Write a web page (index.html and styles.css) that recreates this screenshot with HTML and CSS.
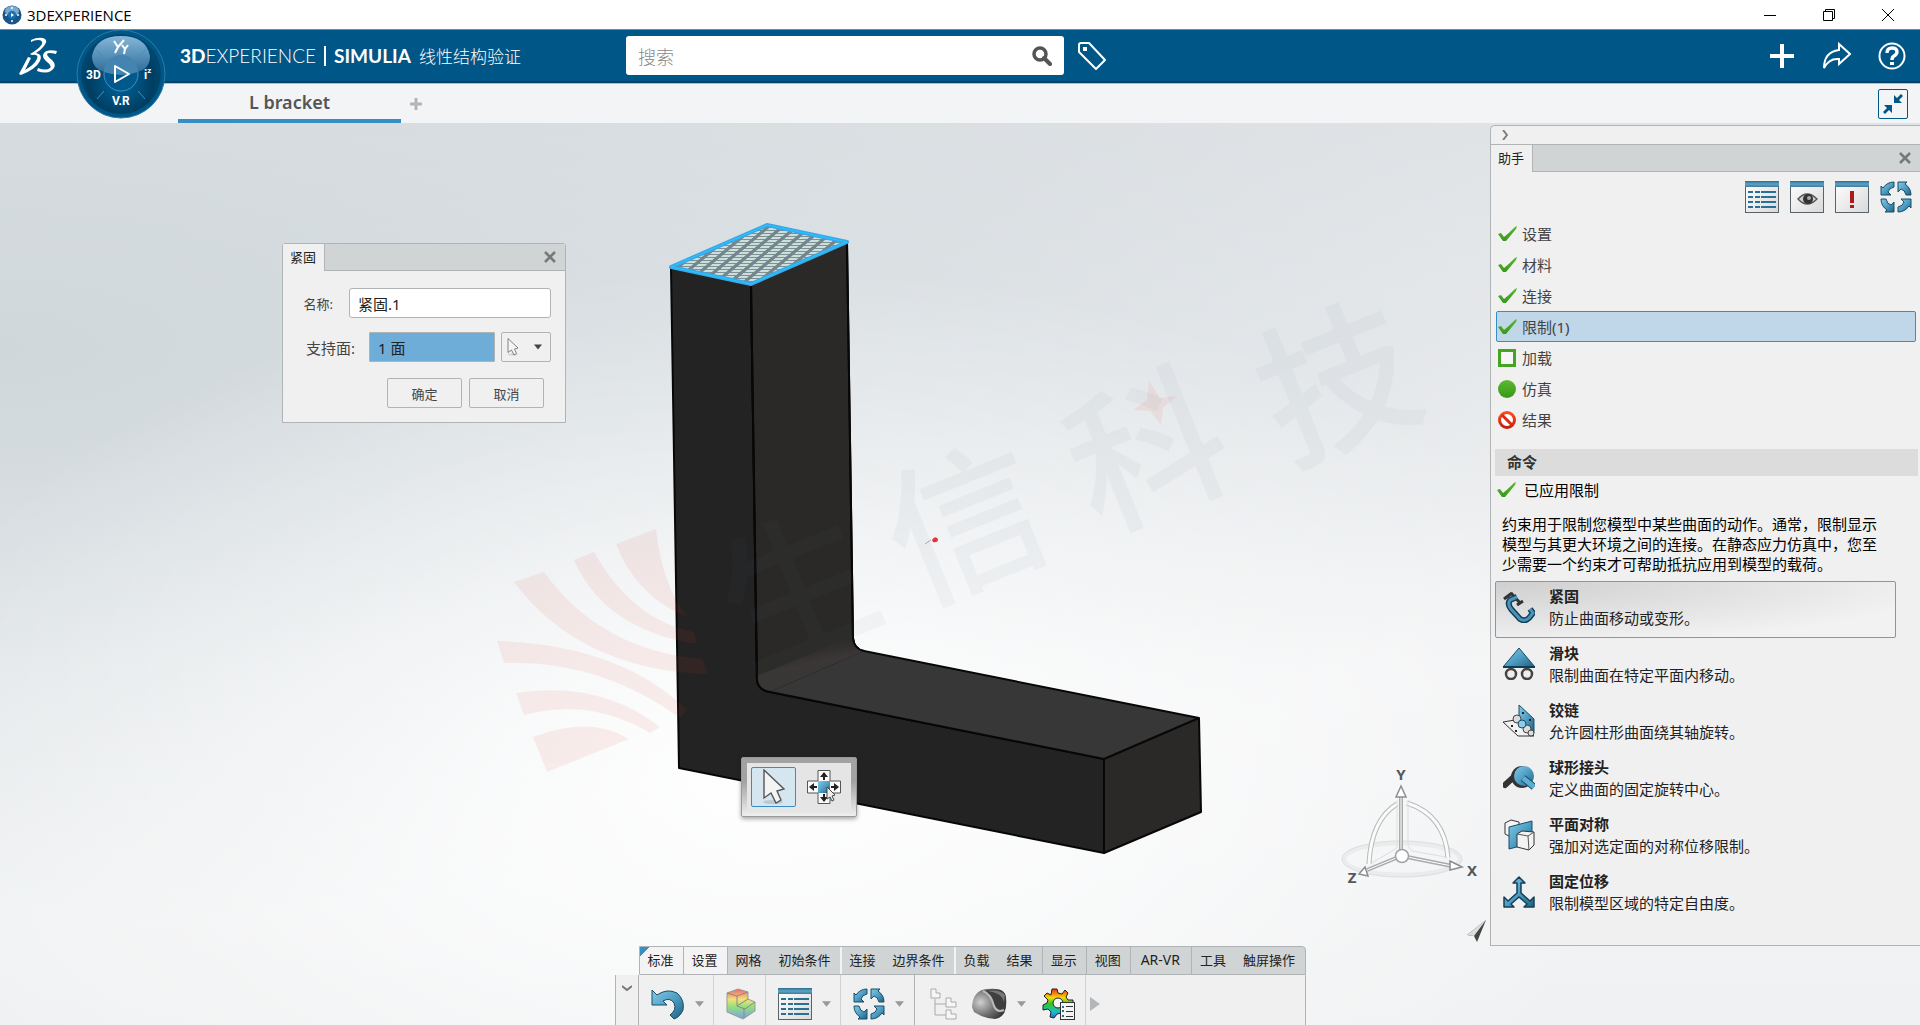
FILE: index.html
```html
<!DOCTYPE html>
<html lang="zh-CN">
<head>
  <meta charset="UTF-8">
  <title>3DEXPERIENCE</title>
  <link rel="stylesheet" href="styles.css">
</head>
<body>

  <!-- Shared icons and gradients -->
  <svg class="defs" width="0" height="0" aria-hidden="true">
    <defs>
      <linearGradient id="blue" x1="0" y1="0" x2="1" y2="1">
        <stop offset="0" stop-color="#86c8e6"/>
        <stop offset="0.5" stop-color="#4f9fc4"/>
        <stop offset="1" stop-color="#1f5f80"/>
      </linearGradient>
      <linearGradient id="bar" x1="0" y1="0" x2="0" y2="1">
        <stop offset="0" stop-color="#2b6c8c"/>
        <stop offset="0.5" stop-color="#5fa3c4"/>
        <stop offset="1" stop-color="#3b7c9c"/>
      </linearGradient>
      <linearGradient id="sheet" x1="0" y1="0" x2="1" y2="1">
        <stop offset="0" stop-color="#ffffff"/>
        <stop offset="1" stop-color="#d9d9d9"/>
      </linearGradient>
      <linearGradient id="green" x1="0" y1="0" x2="0" y2="1">
        <stop offset="0" stop-color="#5cb82f"/>
        <stop offset="1" stop-color="#38981a"/>
      </linearGradient>
      <linearGradient id="red" x1="0" y1="0" x2="0" y2="1">
        <stop offset="0" stop-color="#ff4a1c"/>
        <stop offset="1" stop-color="#c91f12"/>
      </linearGradient>
      <linearGradient id="rainbow" x1="0" y1="0" x2="0" y2="1">
        <stop offset="0" stop-color="#f0686a"/>
        <stop offset="0.35" stop-color="#f1e07c"/>
        <stop offset="0.6" stop-color="#8fe07c"/>
        <stop offset="1" stop-color="#7d9df0"/>
      </linearGradient>
      <linearGradient id="gearfill" x1="0" y1="0" x2="0" y2="1">
        <stop offset="0" stop-color="#f02c10"/>
        <stop offset="0.3" stop-color="#f5d90a"/>
        <stop offset="0.5" stop-color="#2ccc20"/>
        <stop offset="0.8" stop-color="#1cb8d8"/>
        <stop offset="1" stop-color="#2468c8"/>
      </linearGradient>
      <radialGradient id="steel" cx="0.25" cy="0.45" r="0.8">
        <stop offset="0" stop-color="#cfcfcf"/>
        <stop offset="0.55" stop-color="#6e6e6e"/>
        <stop offset="1" stop-color="#2e2e2e"/>
      </radialGradient>
    </defs>

    <symbol id="i-check" viewBox="0 0 20 16">
      <path d="M1 8 L4 7 L7 11 Q12 7 18 1 L20 0 L19 3 L9 15 L6 15 Z" fill="url(#green)"/>
    </symbol>
    <symbol id="i-close" viewBox="0 0 12 12">
      <path d="M1 1 L11 11 M11 1 L1 11" stroke="#77797b" stroke-width="2.6" fill="none"/>
    </symbol>
    <symbol id="i-list" viewBox="0 0 34 32">
      <rect x="0.5" y="0.5" width="33" height="31" fill="url(#sheet)" stroke="#5a6468"/>
      <rect width="34" height="6" fill="url(#bar)"/>
      <path d="M3 11H15M3 16H15M3 21H15M3 26H15" stroke="#2b6f92" stroke-width="2" stroke-dasharray="5 2"/>
      <path d="M16 11H31M16 16H31M16 21H31M16 26H31" stroke="#2b6f92" stroke-width="2"/>
    </symbol>
    <symbol id="i-eye" viewBox="0 0 34 32">
      <rect x="0.5" y="0.5" width="33" height="31" fill="url(#sheet)" stroke="#5a6468"/>
      <rect width="34" height="6" fill="url(#bar)"/>
      <path d="M8 18 Q17 8 27 18 Q17 28 8 18Z" fill="#cfcfcf" stroke="#555" stroke-width="1.4"/>
      <circle cx="18" cy="18" r="5" fill="#333"/>
      <circle cx="19" cy="17" r="2" fill="#aaa"/>
    </symbol>
    <symbol id="i-alert" viewBox="0 0 34 32">
      <rect x="0.5" y="0.5" width="33" height="31" fill="url(#sheet)" stroke="#5a6468"/>
      <rect width="34" height="6" fill="url(#bar)"/>
      <path d="M15 10H19V22H15ZM15 24H19V27H15Z" fill="#a81c1c"/>
    </symbol>
    <symbol id="i-cycle" viewBox="0 0 32 32">
      <g fill="url(#blue)" stroke="#174d68" stroke-width="1" stroke-linejoin="round">
        <path d="M14 1 V6 Q9 7 8 11 L11 14 H1 V5 L3 7 Q7 1 14 1Z"/>
        <path d="M31 14 H26 Q25 9 21 8 L18 11 V1 H27 L25 3 Q31 7 31 14Z"/>
        <path d="M18 31 V26 Q23 25 24 21 L21 18 H31 V27 L29 25 Q25 31 18 31Z"/>
        <path d="M1 18 H6 Q7 23 11 24 L14 21 V31 H5 L7 29 Q1 25 1 18Z"/>
      </g>
    </symbol>
    <symbol id="i-cursor" viewBox="0 0 24 36">
      <ellipse cx="11" cy="33" rx="10" ry="2" fill="#000" opacity="0.12"/>
      <path d="M2 1 L22 20 L15 22 L19 31 L14 34 L9 24 L2 29Z" fill="#f4f4f4" stroke="#555" stroke-width="1.4"/>
    </symbol>
    <symbol id="i-down" viewBox="0 0 10 6">
      <path d="M0 0 H10 L5 6Z" fill="currentColor"/>
    </symbol>
  </svg>

  <!-- Window title bar -->
  <div class="titlebar">
    <svg class="app-icon" viewBox="0 0 20 20">
      <circle cx="10" cy="10" r="9.5" fill="#17568a"/>
      <ellipse cx="10" cy="6" rx="7" ry="5" fill="#78a9d0"/>
      <circle cx="10" cy="10" r="4" fill="#1d6fae"/>
      <path d="M9 8 L12 10 L9 12Z" fill="#fff"/>
      <path d="M3 10H5M15 10H17M9 16H11M9 3H11" stroke="#fff" stroke-width="1.5"/>
    </svg>
    <span class="title-text">3DEXPERIENCE</span>
    <div class="window-controls">
      <button aria-label="最小化"><svg width="12" height="12"><path d="M0 6.5H12" stroke="#000"/></svg></button>
      <button aria-label="还原"><svg width="12" height="12" fill="none" stroke="#000"><path d="M0.5 2.5H9.5V11.5H0.5ZM2.5 2V0.5H11.5V9.5H10"/></svg></button>
      <button aria-label="关闭"><svg width="12" height="12"><path d="M0 0L12 12M12 0L0 12" stroke="#000"/></svg></button>
    </div>
  </div>

  <!-- Blue header -->
  <header class="header">
    <a class="ds-logo" href="#" aria-label="DS">
      <svg viewBox="0 0 38 38" width="38" height="38" fill="#fff">
        <path d="M12 3 Q18 0 24 1 Q30 3 25 9 Q22 13 17 16 Q24 17 21 24 Q17 32 2 38 L0 37 L9 20 L12 21 L6 33 Q15 28 18 22 Q20 17 13 18 L11 17 Q20 12 23 7 Q24 3 19 3 Q15 3 12 5Z"/>
        <path d="M38 14 L37 17 Q29 15 28 17 Q28 19 33 23 Q39 29 32 34 Q27 37 18 34 L19 31 Q27 34 31 31 Q33 29 28 25 Q22 20 25 16 Q28 12 38 14Z"/>
      </svg>
    </a>
    <button class="compass" aria-label="Compass">
      <svg viewBox="0 0 90 90" width="90" height="90">
        <defs>
          <radialGradient id="disc" cx="0.5" cy="0.6" r="0.5">
            <stop offset="0" stop-color="#00679f"/>
            <stop offset="0.8" stop-color="#003e62"/>
            <stop offset="1" stop-color="#00466e"/>
          </radialGradient>
          <linearGradient id="gloss" x1="0" y1="0" x2="0" y2="1">
            <stop offset="0" stop-color="#86b6d8"/>
            <stop offset="1" stop-color="#2f6f9c"/>
          </linearGradient>
        </defs>
        <circle cx="45" cy="44" r="44" fill="#005686" stroke="#2d7ba8" stroke-width="1"/>
        <circle cx="45" cy="44" r="40" fill="url(#disc)"/>
        <path d="M16 26 Q20 6 45 6 Q70 6 74 26 Q74 39 61 42 Q58 27 45 27 Q32 27 29 42 Q16 39 16 26Z" fill="url(#gloss)"/>
        <path d="M21 20 L28 28 M69 20 L62 28 M21 69 L28 61 M69 69 L62 61" stroke="#3c93c6" stroke-width="1"/>
        <circle cx="45" cy="44" r="17" fill="#00588c" stroke="#3c93c6"/>
        <path d="M28 42 A17 17 0 0 1 62 42 Q45 48 28 42Z" fill="#4484b0"/>
        <path d="M39 36 L53 44 L39 52Z" fill="none" stroke="#fff" stroke-width="2" stroke-linejoin="round"/>
        <path d="M38 11 L42 17 L48 10 M42 17 L39 23 M46 15 L49 19 L52 15 M49 19 L48 24" stroke="#fff" stroke-width="2" fill="none"/>
        <text x="10" y="49" class="compass-text">3D</text>
        <text x="68" y="49" class="compass-text">i<tspan dy="-6" font-size="8">z</tspan></text>
        <text x="36" y="75" class="compass-text">V.R</text>
      </svg>
    </button>
    <div class="brand"><b>3D</b><span>EXPERIENCE</span><i></i><strong>SIMULIA</strong><em>线性结构验证</em></div>
    <div class="search">
      <input type="text" placeholder="搜索" aria-label="搜索">
      <button aria-label="开始搜索">
        <svg viewBox="0 0 20 20" width="20" height="20" fill="none" stroke="#555"><circle cx="8" cy="8" r="6" stroke-width="3.5"/><path d="M12 12L18 18" stroke-width="4" stroke-linecap="round"/></svg>
      </button>
    </div>
    <button class="tag" aria-label="标签">
      <svg viewBox="0 0 28 28" width="28" height="28" fill="none" stroke="#fff" stroke-width="2" stroke-linejoin="round"><path d="M1 3 Q1 1 3 1 H11 L27 18 L18 27 L1 10Z"/><path d="M5 5H9V9H5Z" fill="#fff" stroke="none"/></svg>
    </button>
    <div class="header-actions">
      <button aria-label="添加"><svg viewBox="0 0 28 28" width="28" height="28"><path d="M14 2V26M2 14H26" stroke="#fff" stroke-width="4"/></svg></button>
      <button aria-label="共享"><svg viewBox="0 0 28 28" width="28" height="28" fill="none" stroke="#fff" stroke-width="2"><path d="M16 2 L27 12 L16 22 V17 Q6 16 1 26 Q1 10 16 8Z"/></svg></button>
      <button aria-label="帮助"><svg viewBox="0 0 28 28" width="28" height="28" fill="none" stroke="#fff"><circle cx="14" cy="14" r="12.5" stroke-width="2"/><path d="M9 11 Q9 6 14 6 Q19 6 19 10 Q19 12 16 14 Q14 15 14 18" stroke-width="3.4"/><path d="M12 20H16V23H12Z" fill="#fff" stroke="none"/></svg></button>
    </div>
  </header>

  <!-- Document tabs -->
  <nav class="doc-tabs">
    <button class="doc-tab">L bracket</button>
    <button class="doc-add" aria-label="新建标签"><svg width="12" height="12"><path d="M6 0V12M0 6H12" stroke="#b2b4b6" stroke-width="3"/></svg></button>
    <button class="shrink" aria-label="收缩">
      <svg width="20" height="20" fill="#005686"><path d="M11 1 L14 4 L18 0 L20 2 L16 6 L19 9 H11Z"/><path d="M9 19 L6 16 L2 20 L0 18 L4 14 L1 11 H9Z"/></svg>
    </button>
  </nav>

  <main class="workspace">

    <!-- 3D scene -->
    <svg class="scene" viewBox="0 123 1920 902">
      <defs>
        <pattern id="hatch" width="14" height="3" patternUnits="userSpaceOnUse" patternTransform="skewX(-50)">
          <rect width="14" height="3" fill="#74868d"/>
          <path d="M5 0H14V2H5Z" fill="#cddfda"/>
        </pattern>
        <linearGradient id="fillet" x1="0" y1="0" x2="0.4" y2="1">
          <stop offset="0.3" stop-color="#2b2927"/>
          <stop offset="0.6" stop-color="#3a3736"/>
          <stop offset="1" stop-color="#373737"/>
        </linearGradient>
      </defs>

      <!-- L bracket -->
      <g stroke="#070707" stroke-width="2" stroke-linejoin="round">
        <path d="M671 268 L751 284 L757 680 Q758 690 770 692 L1104 759 V853 L679 768Z" fill="#232323"/>
        <path d="M751 284 L847 242 L853 638 Q854 649 864 651 L770 692 Q758 690 757 680Z" fill="#2b2927"/>
        <path d="M757 676 L853 636 Q854 649 864 651 L770 692 Q758 690 757 676Z" fill="url(#fillet)" stroke="none"/>
        <path d="M770 692 L864 651 L1199 718 L1104 759Z" fill="#373737" stroke="none"/>
        <path d="M1104 759 L1199 718 L1201 812 L1104 853Z" fill="#2b2927"/>
        <path d="M751 284 L757 680 Q758 690 770 692 L1104 759 M847 242 L853 638 Q854 649 864 651 L1199 718" fill="none"/>
      </g>
      <path d="M671 267 L767 225 L847 242 L751 284Z" fill="url(#hatch)" stroke="#3fa4ee" stroke-width="4" stroke-linejoin="round"/>
      <path d="M671 267 L767 225 L847 242 L751 284Z" fill="none" stroke="#12d4f2" stroke-width="1"/>

      <!-- Watermark -->
      <g fill="#e04030" opacity="0.08">
        <path d="M616 544 L656 529 Q662 585 687 617 Q636 596 616 544Z"/>
        <path d="M574 560 L594 552 Q632 620 694 632 L697 644 Q605 630 574 560Z"/>
        <path d="M514 582 L544 572 Q600 650 702 659 L708 674 Q580 670 514 582Z"/>
        <path d="M497 641 Q620 645 687 710 L680 718 Q600 660 504 663Z"/>
        <path d="M516 693 Q600 680 660 727 L650 733 Q590 697 524 715Z"/>
        <path d="M533 737 Q590 715 629 739 L547 772Z"/>
        <path d="M1149 381 L1160 398 L1177 396 L1163 408 L1161 425 L1150 411 L1133 410 L1147 400Z"/>
      </g>
      <g class="watermark">
        <text transform="translate(793 580) rotate(-22)">生</text>
        <text transform="translate(961 514) rotate(-22)">信</text>
        <text transform="translate(1143 440) rotate(-22)">科</text>
        <text transform="translate(1333 372) rotate(-22)">技</text>
      </g>
      <path d="M925 544 L931 540" stroke="#aaa"/>
      <path d="M932 540 Q935 535 938 539 Q938 543 933 542Z" fill="#e5343c"/>

      <!-- Axis triad -->
      <g fill="none">
        <ellipse cx="1402" cy="859" rx="58" ry="16" stroke="#000" stroke-width="5" opacity="0.04"/>
        <ellipse cx="1402" cy="859" rx="60" ry="18" stroke="#dddfe0" stroke-width="1"/>
        <path d="M1369 864 Q1371 820 1397 804 M1407 803 Q1445 815 1448 858" stroke="#b9bbbc" stroke-width="5"/>
        <path d="M1369 864 Q1371 820 1397 804 M1407 803 Q1445 815 1448 858" stroke="#fafbfb" stroke-width="3"/>
        <path d="M1397 800 V848 L1370 864 M1408 800 V846 L1412 851 L1446 857" stroke="#dcdedf"/>
        <path d="M1401 854 V796 M1402 856 L1452 866 M1401 856 L1367 870" stroke="#a9abac" stroke-width="4"/>
        <path d="M1401 854 V796 M1402 856 L1452 866 M1401 856 L1367 870" stroke="#fff" stroke-width="1"/>
        <path d="M1401 786 L1406 797 H1396Z M1462 867 L1450 861 V870Z M1359 874 L1365 867 L1368 876Z" fill="#fff" stroke="#8b8d8e" stroke-width="1.5"/>
        <circle cx="1402" cy="856" r="6.5" fill="#fff" stroke="#a0a2a3" stroke-width="1.5"/>
      </g>
      <g class="axis-label">
        <text x="1401" y="780">Y</text>
        <text x="1472" y="876">X</text>
        <text x="1352" y="883">Z</text>
      </g>
      <path d="M1486 920 L1467 935 L1474 936 L1477 942Z" fill="#444"/>
      <path d="M1486 920 L1467 935 L1474 936Z" fill="#ddd"/>
    </svg>

    <!-- Clamp dialog -->
    <form class="dialog">
      <div class="pane-head">
        <h2 class="pane-title">紧固</h2>
        <button type="button" class="pane-close" aria-label="关闭"><svg width="12" height="12"><use href="#i-close"/></svg></button>
      </div>
      <div class="dialog-body">
        <div class="field">
          <label for="clamp-name">名称:</label>
          <input type="text" id="clamp-name" value="紧固.1">
        </div>
        <div class="field support">
          <label for="clamp-support">支持面:</label>
          <input type="text" id="clamp-support" value="1 面" readonly>
          <button type="button" class="picker" aria-label="选择方式">
            <svg width="12" height="18"><use href="#i-cursor"/></svg>
            <svg width="8" height="6"><use href="#i-down"/></svg>
          </button>
        </div>
        <div class="dialog-actions">
          <button type="button">确定</button>
          <button type="button">取消</button>
        </div>
      </div>
    </form>

    <!-- Floating context toolbar -->
    <div class="context-bar">
      <div class="context-inner">
        <button class="active" aria-label="选择"><svg width="24" height="36"><use href="#i-cursor"/></svg></button>
        <button aria-label="移动">
          <svg viewBox="0 0 34 34" width="34" height="34">
            <path d="M11 0.5H23V11H33.5V23H23V33.5H11V23H0.5V11H11Z" fill="#fafafa" stroke="#555"/>
            <rect x="11" y="11" width="12" height="12" fill="url(#blue)"/>
            <path d="M17 10V4M17 24V30M10 17H4M24 17H30" stroke="#222" stroke-width="2"/>
            <path d="M17 2L21 7H13ZM17 32L21 27H13ZM2 17L7 13V21ZM32 17L27 13V21Z" fill="#222"/>
            <path d="M20 17 L28 25 L25 26 L27 30 L25 31 L23 27 L20 29Z" fill="#eee" stroke="#444"/>
          </svg>
        </button>
      </div>
    </div>

    <!-- Assistant panel -->
    <aside class="assistant">
      <button class="fold" aria-label="折叠"><svg width="6" height="10"><path d="M1 0L5 5L1 10" stroke="#7b7d7f" stroke-width="2" fill="none"/></svg></button>
      <div class="pane-head">
        <h2 class="pane-title">助手</h2>
        <button class="pane-close" aria-label="关闭"><svg width="12" height="12"><use href="#i-close"/></svg></button>
      </div>
      <div class="assistant-tools">
        <button aria-label="列表"><svg width="34" height="32"><use href="#i-list"/></svg></button>
        <button aria-label="显示"><svg width="34" height="32"><use href="#i-eye"/></svg></button>
        <button aria-label="警告"><svg width="34" height="32"><use href="#i-alert"/></svg></button>
        <button aria-label="更新"><svg width="32" height="32"><use href="#i-cycle"/></svg></button>
      </div>
      <ul class="steps">
        <li><button><svg width="20" height="16"><use href="#i-check"/></svg>设置</button></li>
        <li><button><svg width="20" height="16"><use href="#i-check"/></svg>材料</button></li>
        <li><button><svg width="20" height="16"><use href="#i-check"/></svg>连接</button></li>
        <li class="current"><button><svg width="20" height="16"><use href="#i-check"/></svg>限制(1)</button></li>
        <li><button><svg width="20" height="18"><rect x="2.500" y="1.500" width="15" height="15" fill="#f6f6f6" stroke="#44a522" stroke-width="3"/></svg>加载</button></li>
        <li><button><svg width="20" height="18"><circle cx="10" cy="9" r="9" fill="url(#green)"/></svg>仿真</button></li>
        <li><button><svg width="20" height="18"><circle cx="10" cy="9" r="7.500" fill="#fff" stroke="url(#red)" stroke-width="3"/><path d="M5 4L15 14" stroke="#dd2c14" stroke-width="3"/></svg>结果</button></li>
      </ul>
      <h3 class="section-title">命令</h3>
      <p class="status"><svg width="20" height="16"><use href="#i-check"/></svg>已应用限制</p>
      <p class="help">约束用于限制您模型中某些曲面的动作。通常，限制显示模型与其更大环境之间的连接。在静态应力仿真中，您至少需要一个约束才可帮助抵抗应用到模型的载荷。</p>
      <div class="commands">
        <button class="command selected">
          <svg viewBox="0 0 32 32" width="32" height="32" fill="none">
            <path d="M1 8 L9 2 M8 2 L18 13 M14 14 L20 10" stroke="#333" stroke-width="3"/>
            <path d="M14 6 L7 9 Q4 13 8 18 L17 28 Q22 31 26 27 L30 22 L27 18" stroke="#123f57" stroke-width="6"/>
            <path d="M14 6 L7 9 Q4 13 8 18 L17 28 Q22 31 26 27 L30 22 L27 18" stroke="#4b94b8" stroke-width="3"/>
          </svg>
          <span><b>紧固</b>防止曲面移动或变形。</span>
        </button>
        <button class="command">
          <svg viewBox="0 0 32 32" width="32" height="32">
            <path d="M16 0 L32 19 H0Z" fill="url(#blue)" stroke="#174d68"/>
            <path d="M0 19H32" stroke="#0f3d55" stroke-width="2"/>
            <circle cx="8" cy="26" r="5" fill="#eee" stroke="#444" stroke-width="2.5"/>
            <circle cx="24" cy="26" r="5" fill="#eee" stroke="#444" stroke-width="2.5"/>
          </svg>
          <span><b>滑块</b>限制曲面在特定平面内移动。</span>
        </button>
        <button class="command">
          <svg viewBox="0 0 32 32" width="32" height="32">
            <path d="M0 17 L12 15 L31 31 H15Z" fill="#f2f2f2" stroke="#333"/>
            <path d="M16 0 L31 14 V28 L16 18Z" fill="url(#blue)" stroke="#174d68"/>
            <g fill="#ddd" stroke="#444"><circle cx="14" cy="14" r="4"/><circle cx="24" cy="24" r="4"/><circle cx="28" cy="28" r="3"/></g>
            <circle cx="19" cy="19" r="4" fill="#8ecbe6" stroke="#174d68"/>
            <path d="M8 20h2v2h-2zM12 25h2v2h-2zM19 7h2v2h-2zM26 14h2v2h-2z" fill="#222"/>
          </svg>
          <span><b>铰链</b>允许圆柱形曲面绕其轴旋转。</span>
        </button>
        <button class="command">
          <svg viewBox="0 0 32 32" width="32" height="32">
            <path d="M2 23 L14 12" stroke="#333" stroke-width="6" stroke-linecap="round"/>
            <circle cx="19" cy="15" r="11" fill="#333"/>
            <circle cx="21" cy="14" r="10" fill="url(#blue)"/>
            <path d="M20 16 L31 25" stroke="#174d68" stroke-width="7"/>
            <path d="M20 16 L31 25" stroke="#5caed2" stroke-width="5"/>
          </svg>
          <span><b>球形接头</b>定义曲面的固定旋转中心。</span>
        </button>
        <button class="command">
          <svg viewBox="0 0 32 32" width="32" height="32" stroke-linejoin="round">
            <path d="M2 4 L8 1 L16 3 V15 L8 18 L2 15Z" fill="#f6f6f6" stroke="#333"/>
            <path d="M6 8 L29 2 V24 L6 30Z" fill="url(#blue)" stroke="#174d68"/>
            <path d="M14 15 L19 12 L31 13 V26 L26 31 L14 28Z" fill="#f2f2f2" stroke="#333"/>
            <path d="M14 15 L25 17 L31 13 M25 17 L26 31" stroke="#555" fill="none"/>
          </svg>
          <span><b>平面对称</b>强加对选定面的对称位移限制。</span>
        </button>
        <button class="command">
          <svg viewBox="0 0 32 32" width="32" height="32">
            <path d="M16 1 L22 7 H18 V17 L27 25 L31 21 V31 H21 L24 28 L16 21 L8 28 L11 31 H1 V21 L5 25 L14 17 V7 H10Z" fill="url(#blue)" stroke="#123f57" stroke-width="1.500" stroke-linejoin="round"/>
          </svg>
          <span><b>固定位移</b>限制模型区域的特定自由度。</span>
        </button>
      </div>
    </aside>

    <!-- Action bar -->
    <div class="action-bar">
      <div class="action-tabs">
        <div class="tab-group open first"><button>标准</button></div>
        <div class="tab-group open"><button>设置</button></div>
        <div class="tab-group wide"><button>网格</button><button>初始条件</button></div>
        <div class="tab-group wide"><button>连接</button><button>边界条件</button></div>
        <div class="tab-group"><button>负载</button><button>结果</button></div>
        <div class="tab-group"><button>显示</button></div>
        <div class="tab-group"><button>视图</button></div>
        <div class="tab-group latin"><button>AR-VR</button></div>
        <div class="tab-group last"><button>工具</button><button>触屏操作</button></div>
      </div>
      <div class="action-row">
        <button class="action-fold" aria-label="折叠工具栏"><svg width="10" height="6"><path d="M0 1L5 5L10 1" stroke="#777" stroke-width="2" fill="none"/></svg></button>
        <div class="tool">
          <button aria-label="撤消"><svg viewBox="0 0 34 32" width="34" height="32"><path d="M1 2 L6 7 Q16 0 26 5 Q34 12 32 22 Q29 29 23 31 L19 27 Q26 22 23 15 Q19 9 12 13 L16 17 H1Z" fill="url(#blue)" stroke="#174d68"/></svg></button>
          <button class="drop" aria-label="撤消选项"><svg width="9" height="6"><use href="#i-down"/></svg></button>
        </div>
        <div class="tool">
          <button aria-label="结果图"><svg viewBox="0 0 30 32" width="30" height="32"><path d="M1 5 L12 1 L22 4 V11 L29 14 V23 L17 31 L1 24Z" fill="url(#rainbow)" stroke="#999"/><path d="M1 5 L11 8 L22 4 M11 8 V18 L19 21 L29 14 M11 18 L22 11 M18 21 V30" fill="none" stroke="#888"/></svg></button>
        </div>
        <div class="tool">
          <button aria-label="特征列表"><svg width="34" height="32"><use href="#i-list"/></svg></button>
          <button class="drop" aria-label="列表选项"><svg width="9" height="6"><use href="#i-down"/></svg></button>
        </div>
        <div class="tool solid">
          <button aria-label="更新"><svg width="32" height="32"><use href="#i-cycle"/></svg></button>
          <button class="drop" aria-label="更新选项"><svg width="9" height="6"><use href="#i-down"/></svg></button>
        </div>
        <div class="tool free">
          <button class="tree-btn" aria-label="结构树"><svg viewBox="0 0 28 32" width="28" height="32" fill="#f6f6f6" stroke="#aaa"><path d="M5 11V27H16M5 16H16" fill="none"/><path d="M1 1H6V5H10V10H1ZM16 10H21V14H26V19H16ZM16 22H21V26H26V31H16Z"/></svg></button>
          <button aria-label="渲染"><svg viewBox="0 0 36 32" width="36" height="32"><path d="M1 19 Q2 2 16 1 Q35 -1 35 10 Q37 29 24 31 Q14 31 3 24Z" fill="url(#steel)"/><path d="M12 3 Q20 6 23 18 Q26 25 33 22 Q36 12 33 5 Q27 0 12 3Z" fill="#3f3f3f"/><path d="M12 3 Q20 6 23 18 Q26 25 33 22" fill="none" stroke="#bbb" stroke-width="2"/><path d="M17 3 Q31 5 33 14 L34 7 Q29 1 17 3Z" fill="#777"/></svg></button>
          <button class="drop" aria-label="渲染选项"><svg width="9" height="6"><use href="#i-down"/></svg></button>
        </div>
        <div class="tool">
          <button aria-label="仿真设置"><svg viewBox="0 0 34 32" width="34" height="32"><path d="M10 1 L15 1 L16 5 L20 6 L23 2 L26 5 L24 9 L26 12 L31 12 V17 L26 18 L24 22 L26 26 L22 29 L19 25 L15 26 L12 30 L8 29 L9 24 L6 21 L1 22 L1 17 L5 15 L6 12 L2 8 L5 5 L9 7Z" fill="url(#gearfill)" stroke="#222"/><circle cx="16" cy="15" r="5" fill="#f4f4f4" stroke="#222"/><rect x="18.500" y="14.500" width="14" height="17" fill="#f4f4f4" stroke="#333"/><path d="M24 18.500H31M24 23.500H31M24 28.500H31" stroke="#333"/><path d="M20 18h2v2h-2zM20 22h2v2h-2zM20 27h2v2h-2z" fill="#256c92"/></svg></button>
        </div>
        <button class="more" aria-label="更多"><svg width="10" height="16"><path d="M0 1L10 8L0 15Z" fill="#b4b7b9"/></svg></button>
      </div>
    </div>
  </main>

</body>
</html>
```
FILE: styles.css
```css
/* Global */
* {
  box-sizing: border-box;
}

body {
  margin: 0;
  min-height: 100vh;
  display: flex;
  flex-direction: column;
  font-family: "Noto Sans", "Noto Sans CJK SC", sans-serif;
  font-size: 15px;
  color: #444;
  background: #f3f4f6;
  overflow: hidden;
}

button {
  font: inherit;
  color: inherit;
  background: none;
  border: none;
  padding: 0;
  cursor: pointer;
}

svg {
  display: block;
}

h2, h3, p, ul {
  margin: 0;
  padding: 0;
}

.defs {
  position: absolute;
}

/* Title bar */
.titlebar {
  display: flex;
  align-items: center;
  height: 29px;
  padding: 0 3px 0 2px;
  background: #fff;
}

.app-icon {
  width: 20px;
  height: 20px;
}

.title-text {
  margin-left: 5px;
  font-family: "Open Sans", sans-serif;
  font-size: 15px;
  color: #000;
}

.window-controls {
  display: flex;
  margin-left: auto;
}

.window-controls button {
  width: 59px;
  height: 28px;
  display: flex;
  align-items: center;
  justify-content: center;
}

/* Header */
.header {
  display: flex;
  align-items: center;
  height: 54px;
  padding: 0 14px 0 19px;
  background: #005686;
  border-top: 1px solid #5d93b0;
  border-bottom: 2px solid #00446b;
}

.compass {
  position: relative;
  z-index: 5;
  width: 90px;
  height: 90px;
  margin: 38px 0 0 19px;
}

.compass-text {
  font-family: Roboto, sans-serif;
  font-size: 12px;
  font-weight: bold;
  fill: #fff;
}

.brand {
  display: flex;
  align-items: center;
  width: 445px;
  padding-left: 14px;
  font-family: Lato, sans-serif;
  font-size: 19px;
  color: #fff;
  white-space: nowrap;
}

.brand b {
  font-weight: 900;
}

.brand span {
  font-weight: 300;
}

.brand i {
  width: 2px;
  height: 20px;
  margin: 0 8px;
  background: #fff;
}

.brand em {
  margin-left: 8px;
  font-family: "Noto Sans CJK SC", sans-serif;
  font-size: 17px;
  font-style: normal;
  font-weight: 300;
}

.search {
  display: flex;
  align-items: center;
  flex: 0 1 438px;
  height: 39px;
  margin-left: 15px;
  padding: 0 12px;
  background: #fff;
  border-radius: 3px;
}

.search input {
  flex: 1;
  min-width: 0;
  padding: 0;
  border: none;
  outline: none;
  font-family: "Noto Sans CJK SC", sans-serif;
  font-size: 18px;
  font-weight: 300;
}

.search input::placeholder {
  color: #888;
}

.tag {
  margin-left: 14px;
}

.header-actions {
  display: flex;
  gap: 27px;
  margin-left: auto;
}

/* Document tabs */
.doc-tabs {
  display: flex;
  align-items: center;
  height: 40px;
  padding: 0 12px 0 178px;
  background: #f3f4f6;
  border-top: 1px solid #a9bfcb;
}

.doc-tab {
  width: 223px;
  height: 39px;
  border-bottom: 4px solid #368ec4;
  font-size: 18px;
  font-weight: 600;
  line-height: 32px;
  color: #555;
}

.doc-add {
  margin-left: 9px;
}

.shrink {
  display: flex;
  align-items: center;
  justify-content: center;
  width: 30px;
  height: 30px;
  margin-left: auto;
  border: 1px solid #005686;
  border-radius: 2px;
}

/* Workspace */
.workspace {
  position: relative;
  flex: 1;
  min-height: 902px;
  background:
    radial-gradient(ellipse at 40% 72%, rgba(255, 255, 255, 1) 0%, rgba(255, 255, 255, 0) 55%),
    radial-gradient(ellipse at 0% 25%, #cfd7db 0%, rgba(207, 215, 219, 0) 60%),
    linear-gradient(#e0e3e6, #f3f4f5 60%, #eff1f2);
}

.scene {
  position: absolute;
  width: 100%;
  height: 100%;
}

.watermark {
  font-family: "Noto Sans CJK SC", sans-serif;
  font-size: 155px;
  font-weight: 500;
  fill: #5a6478;
  opacity: 0.05;
  text-anchor: middle;
  dominant-baseline: central;
}

.axis-label {
  font-size: 15px;
  font-weight: bold;
  fill: #55585a;
  text-anchor: middle;
}

/* Shared pane header */
.pane-head {
  display: flex;
  align-items: flex-start;
  height: 27px;
  background: #d0d4d5;
}

.pane-title {
  height: 27px;
  padding: 0 8px 0 7px;
  background: #f0f0f0;
  border-right: 1px solid #b0b4b7;
  font-size: 13px;
  font-weight: normal;
  line-height: 27px;
  color: #222;
}

.pane-close {
  display: flex;
  flex: 1;
  align-items: center;
  justify-content: flex-end;
  height: 27px;
  padding: 0 9px;
  border-bottom: 1px solid #b0b4b7;
}

/* Dialog */
.dialog {
  position: absolute;
  top: 120px;
  left: 282px;
  width: 284px;
  background: #f0f0f0;
  border: 1px solid #b0b4b7;
  border-radius: 3px 3px 0 0;
}

.dialog-body {
  display: flex;
  flex-direction: column;
  gap: 14px;
  padding: 17px 14px 14px;
}

.field {
  display: flex;
  align-items: center;
  justify-content: flex-end;
  gap: 6px;
}

.field label {
  margin-right: 10px;
  font-size: 13px;
}

.field input {
  width: 202px;
  height: 30px;
  padding: 0 8px;
  border: 1px solid #b0b4b7;
  border-radius: 3px;
  background: #fff;
  font: inherit;
  color: #222;
}

.support label {
  margin-right: 8px;
  font-size: 15px;
}

.support input {
  width: 126px;
  background: #6eadd7;
  border-radius: 1px;
}

.picker {
  display: flex;
  align-items: center;
  justify-content: space-between;
  width: 50px;
  height: 30px;
  padding: 0 8px 0 5px;
  border: 1px solid #b0b4b7;
  border-radius: 2px;
}

.dialog-actions {
  display: flex;
  justify-content: flex-end;
  gap: 7px;
  padding: 2px 7px 0 0;
}

.dialog-actions button {
  width: 75px;
  height: 30px;
  border: 1px solid #b0b4b7;
  border-radius: 2px;
  font-size: 13px;
}

/* Context toolbar */
.context-bar {
  position: absolute;
  top: 634px;
  left: 741px;
  width: 116px;
  padding: 5px;
  border: 1px solid #999;
  border-radius: 2px;
  background: linear-gradient(#a2a2a2 40%, #efefef);
  box-shadow: 0 2px 4px rgba(0, 0, 0, 0.35);
}

.context-inner {
  display: flex;
  align-items: center;
  gap: 11px;
  padding: 4px;
  background: #e5e5e5;
}

.context-inner .active {
  display: flex;
  justify-content: center;
  align-items: center;
  width: 45px;
  height: 40px;
  border: 1px solid #368ec4;
  border-radius: 2px;
  background: #d5e6f0;
}

/* Assistant */
.assistant {
  position: absolute;
  top: 2px;
  right: 0;
  width: 430px;
  padding-bottom: 22px;
  background: #f0f0f0;
  border: 1px solid #b0b4b7;
  border-right: none;
  border-top-left-radius: 5px;
}

.fold {
  display: flex;
  align-items: center;
  width: 100%;
  height: 19px;
  padding-left: 11px;
  border-bottom: 1px solid #b0b4b7;
}

.assistant-tools {
  display: flex;
  justify-content: flex-end;
  gap: 11px;
  padding: 9px 8px 5px;
}

.steps {
  padding: 0 4px 0 5px;
  list-style: none;
}

.steps button {
  display: flex;
  align-items: center;
  gap: 5px;
  width: 100%;
  height: 31px;
  border: 1px solid transparent;
  border-radius: 2px;
}

.steps .current button {
  background: #c0d6e9;
  border-color: #368ec4;
}

.section-title {
  margin: 14px 2px 0 4px;
  padding-left: 12px;
  background: #dcdcdc;
  font-size: 15px;
  line-height: 27px;
  color: #333;
}

.status {
  display: flex;
  align-items: center;
  gap: 8px;
  padding-left: 5px;
  line-height: 28px;
  color: #000;
}

.help {
  padding: 10px 42px 7px 11px;
  line-height: 20px;
  color: #000;
}

.commands {
  padding: 0 24px 0 4px;
}

.command {
  display: flex;
  align-items: center;
  gap: 14px;
  width: 100%;
  height: 57px;
  padding: 0 7px 6px;
  border: 1px solid transparent;
  border-radius: 2px;
  text-align: left;
  line-height: 22px;
  color: #222;
}

.command b {
  display: block;
}

.command.selected {
  border-color: #58a5d6;
  background: radial-gradient(ellipse at 0 0, #cfcfcf, #f2f2f2 80%);
}

/* Action bar */
.action-bar {
  position: absolute;
  right: 0;
  bottom: 0;
  left: 0;
  width: 691px;
  margin: 0 auto;
}

.action-tabs {
  display: flex;
  height: 29px;
  margin-left: 24px;
  background: #d0d4d5;
  border: 1px solid #b0b4b7;
  border-radius: 0 4px 0 0;
  font-size: 13px;
  color: #222;
}

.tab-group {
  display: flex;
  border-right: 1px solid #b0b4b7;
}

.tab-group button {
  padding: 0 9px 2px 8px;
}

.tab-group.open {
  background: #f3f3f3;
}

.tab-group.first {
  background: linear-gradient(135deg, #368ec4 7px, #f3f3f3 7px);
}

.tab-group.wide {
  border-right: 2px solid #f3f3f3;
}

.tab-group.latin {
  padding: 0 2px;
  font-size: 14px;
}

.tab-group.last {
  border-right: none;
}

.action-row {
  display: flex;
  align-items: center;
  height: 50px;
  background: #f0f0f0;
  border: 1px solid #b0b4b7;
  border-top: none;
  border-bottom: none;
}

.action-fold {
  display: flex;
  justify-content: center;
  width: 23px;
  height: 50px;
  padding-top: 10px;
  border-right: 1px solid #b0b4b7;
}

.tool {
  display: flex;
  align-items: center;
  height: 50px;
  padding: 7px 9px 0 12px;
  border-right: 1px solid #cfd1d2;
}

.tool.solid {
  padding-right: 10px;
  border-color: #b0b4b7;
}

.tool.free {
  padding-right: 4px;
  border-right: none;
}

.tree-btn {
  margin: 0 13px 0 3px;
}

.drop {
  padding-left: 10px;
  color: #999;
}

.more {
  padding: 7px 0 0 4px;
}
```
